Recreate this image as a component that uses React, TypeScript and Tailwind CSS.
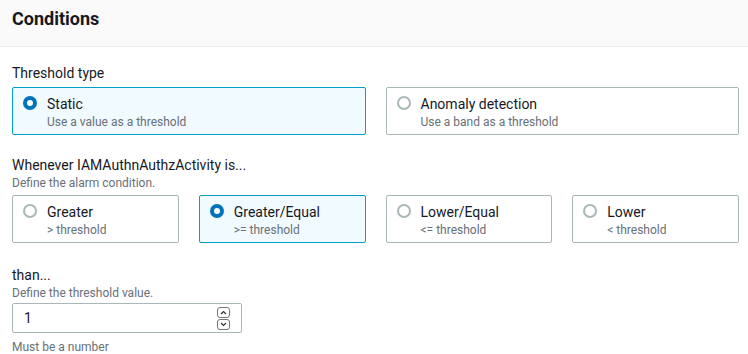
import React from 'react';

type Option = { label: string; hint: string; selected?: boolean };

const thresholdTypes: Option[] = [
  { label: 'Static', hint: 'Use a value as a threshold', selected: true },
  { label: 'Anomaly detection', hint: 'Use a band as a threshold' },
];

const operators: Option[] = [
  { label: 'Greater', hint: '> threshold' },
  { label: 'Greater/Equal', hint: '>= threshold', selected: true },
  { label: 'Lower/Equal', hint: '<= threshold' },
  { label: 'Lower', hint: '< threshold' },
];

function Radio({ on }: { on?: boolean }) {
  return on ? (
    <span className="mt-[2px] h-[14px] w-[14px] shrink-0 rounded-full border-[4px] border-[#0073bb] bg-white" />
  ) : (
    <span className="mt-[2px] h-[14px] w-[14px] shrink-0 rounded-full border-2 border-[#aab7b8] bg-white" />
  );
}

function Tile({ opt }: { opt: Option }) {
  return (
    <div
      className={
        opt.selected
          ? 'flex h-[48px] gap-[10px] rounded-[2px] border border-[#00a1c9] bg-[#f1faff] pl-[10px] pt-[6px]'
          : 'flex h-[48px] gap-[10px] rounded-[2px] border border-[#aab7b8] bg-white pl-[10px] pt-[6px]'
      }
    >
      <Radio on={opt.selected} />
      <div className="flex flex-col">
        <span className="text-[14px] leading-[20px] text-[#16191f]">{opt.label}</span>
        <span className="text-[12px] leading-[16px] text-[#687078]">{opt.hint}</span>
      </div>
    </div>
  );
}

function Spinner() {
  return (
    <div className="flex flex-col gap-[1px]">
      <span className="flex h-[11px] w-[13px] items-center justify-center rounded-[3px] border border-[#767676] bg-white">
        <svg width="7" height="5" viewBox="0 0 7 5" fill="none" stroke="#333" strokeWidth="1.2">
          <path d="M1 4L3.5 1.5L6 4" />
        </svg>
      </span>
      <span className="flex h-[11px] w-[13px] items-center justify-center rounded-[3px] border border-[#767676] bg-white">
        <svg width="7" height="5" viewBox="0 0 7 5" fill="none" stroke="#333" strokeWidth="1.2">
          <path d="M1 1L3.5 3.5L6 1" />
        </svg>
      </span>
    </div>
  );
}

export default function App() {
  return (
    <div className="h-[354px] w-[748px] overflow-hidden bg-white font-['Roboto',sans-serif] text-[#16191f]">
      <div className="flex h-[47px] items-center border-b border-[#eaeded] bg-[#fafafa] px-[12px] pb-[8px]">
        <h2 className="text-[18px] font-bold leading-[22px]">Conditions</h2>
      </div>

      <div className="pl-[12px] pr-[9px] pt-[16px]">
        <div className="text-[14px] leading-[20px]">Threshold type</div>
        <div className="mt-[4px] grid grid-cols-2 gap-[20px]">
          {thresholdTypes.map((o) => (
            <Tile key={o.label} opt={o} />
          ))}
        </div>

        <div className="mt-[20px] text-[14px] leading-[20px]">Whenever IAMAuthnAuthzActivity is...</div>
        <div className="text-[12px] leading-[16px] text-[#687078]">Define the alarm condition.</div>
        <div className="mt-[4px] grid grid-cols-4 gap-[20px]">
          {operators.map((o) => (
            <Tile key={o.label} opt={o} />
          ))}
        </div>

        <div className="mt-[22px] text-[14px] leading-[20px]">than...</div>
        <div className="text-[12px] leading-[16px] text-[#687078]">Define the threshold value.</div>
        <div className="mt-[2px] flex h-[30px] w-[230px] items-center justify-between rounded-[2px] border border-[#aab7b8] pl-[11px] pr-[11px]">
          <span className="text-[14px]">1</span>
          <Spinner />
        </div>
        <div className="mt-[6px] text-[12px] leading-[16px] text-[#687078]">Must be a number</div>
      </div>
    </div>
  );
}
